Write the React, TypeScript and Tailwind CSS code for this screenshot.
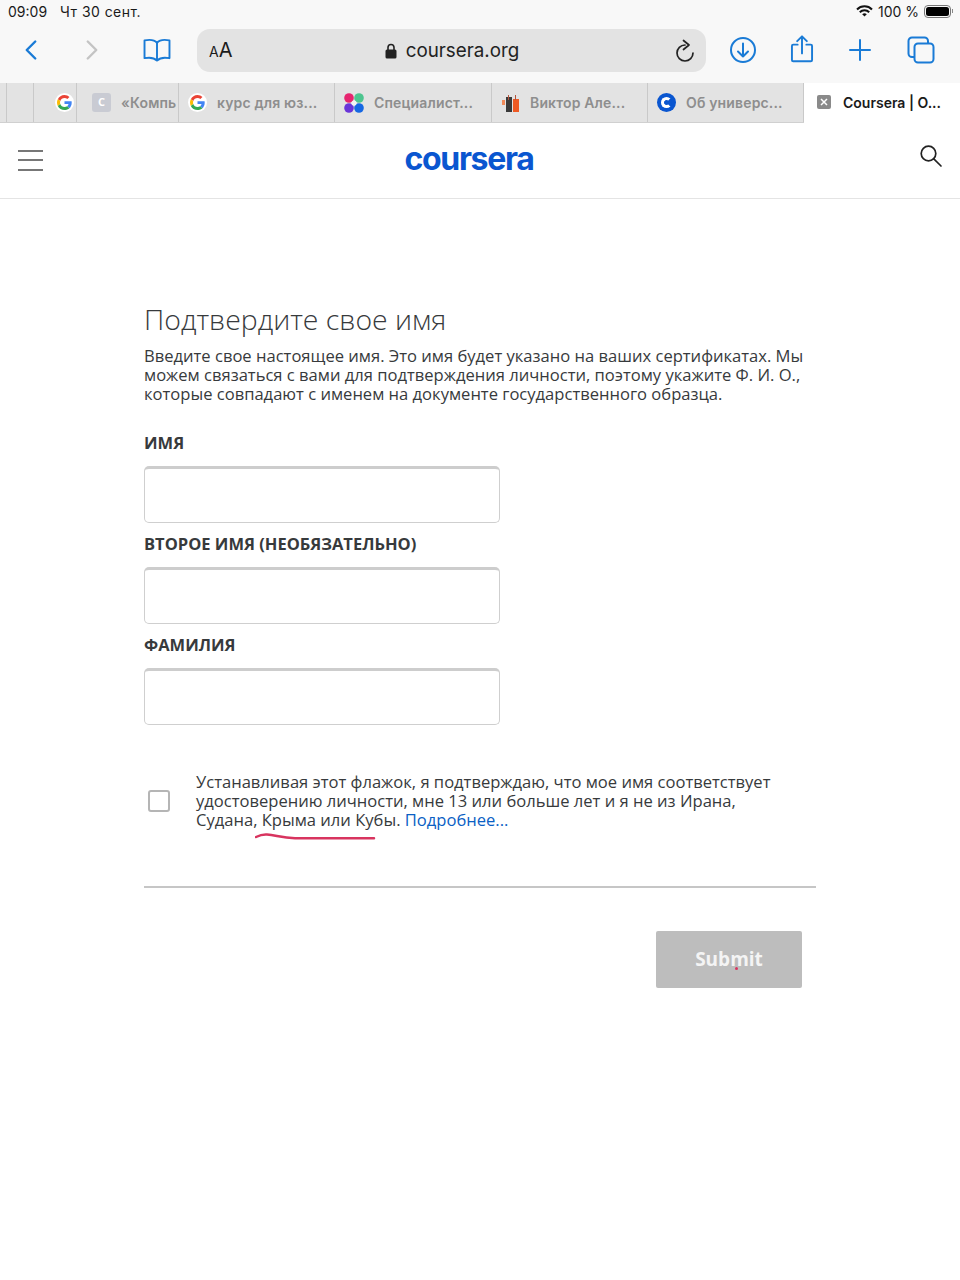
import { ChevronLeft, ChevronRight } from 'lucide-react';

const BLUE = '#1a7bd6';

function GoogleIcon({ size = 16 }: { size?: number }) {
  return (
    <svg width={size} height={size} viewBox="0 0 48 48">
      <path fill="#EA4335" d="M24 9.5c3.5 0 6.7 1.3 9.1 3.5l6.8-6.8C35.800 2.400 30.300 0 24 0 14.600 0 6.500 5.400 2.600 13.200l7.900 6.100C12.400 13.600 17.700 9.500 24 9.500z" />
      <path fill="#4285F4" d="M47 24.500c0-1.600-.1-3.100-.4-4.500H24v9h12.900c-.6 3-2.200 5.500-4.700 7.200l7.600 5.900C44.300 37.900 47 31.800 47 24.500z" />
      <path fill="#FBBC05" d="M10.500 28.700c-.5-1.400-.8-3-.8-4.700s.3-3.200.8-4.700l-7.900-6.100C.9 16.500 0 20.100 0 24s.9 7.500 2.600 10.800l7.900-6.100z" />
      <path fill="#34A853" d="M24 48c6.500 0 11.900-2.100 15.800-5.800l-7.600-5.900c-2.100 1.400-4.900 2.300-8.200 2.300-6.300 0-11.600-4.100-13.500-9.800l-7.900 6.100C6.500 42.600 14.600 48 24 48z" />
    </svg>
  );
}

function Tab({ width, icon, title }: { width: string; icon: React.ReactNode; title: string }) {
  return (
    <div className={`flex h-full items-center overflow-hidden border-r border-[#c9c9c9] ${width}`}>
      {icon}
      <span className="ml-[10px] whitespace-nowrap font-['Inter',sans-serif] text-[14px] font-semibold tracking-[0.15px] text-[#8e8e8e]">{title}</span>
    </div>
  );
}

function Field({ label }: { label: string }) {
  return (
    <div>
      <label className="block h-[23px] text-[16.500px] font-bold leading-[21px] text-[#373a3c]">{label}</label>
      <div className="mt-[11px] h-[57px] w-[356px] rounded-[5px] border border-[#cfcfcf] border-t-[3px] border-t-[#cdcdcd] bg-white" />
    </div>
  );
}

export default function App() {
  return (
    <div className="flex min-h-[1280px] w-[960px] flex-col bg-white font-['Open_Sans',sans-serif]">
      {/* status bar */}
      <div className="flex h-[22px] items-center justify-between bg-[#f8f8f8] pl-[8px] pr-[7px] font-['Inter',sans-serif] text-[14px] text-[#1a1a1a]">
        <div className="flex gap-[13px]">
          <span>09:09</span>
          <span className="tracking-[0.45px]">Чт 30 сент.</span>
        </div>
        <div className="flex items-center gap-[5px]">
          <svg width="17" height="12" viewBox="0 0 17 12" fill="none" stroke="#111" strokeWidth="2">
            <path d="M1 4.500a10.500 10.500 0 0 1 15 0" />
            <path d="M3.800 7.200a6.500 6.500 0 0 1 9.400 0" />
            <path d="M8.500 11.500 6.200 9.300a3.300 3.300 0 0 1 4.600 0z" fill="#111" stroke="none" />
          </svg>
          <span>100 %</span>
          <div className="flex items-center">
            <div className="h-[13px] w-[27px] rounded-[4px] border border-[#777] p-[1px]">
              <div className="h-full w-full rounded-[2.500px] bg-black" />
            </div>
            <div className="ml-[1px] h-[4px] w-[1px] bg-[#888]" />
          </div>
        </div>
      </div>

      {/* toolbar */}
      <div className="flex h-[61px] items-center bg-[#f8f8f8] pb-[5px]">
        <div className="flex w-[197px] items-center">
          <ChevronLeft size={34} strokeWidth={1.7} color={BLUE} className="ml-[14px]" />
          <ChevronRight size={34} strokeWidth={1.7} color="#c4c4c4" className="ml-[27px]" />
          <svg width="30" height="24" viewBox="0 0 30 25" fill="none" stroke={BLUE} strokeWidth="2" strokeLinejoin="round" className="ml-[33px]">
            <path d="M15 5C12.500 2 7 1.500 2 2.500V21c5-1 10-.5 13 2.500C18 20.500 23 20 28 21V2.500C23 1.500 17.500 2 15 5z" />
            <path d="M15 5v18" />
          </svg>
        </div>
        <div className="flex h-[43px] w-[509px] items-center rounded-[13px] bg-[#e3e3e3] pl-[12px] pr-[9px]">
          <span className="w-[24px] whitespace-nowrap font-['Inter',sans-serif] text-[#1c1c1c]">
            <span className="text-[14px]">A</span>
            <span className="text-[20px]">A</span>
          </span>
          <div className="flex flex-1 items-center justify-center pt-[2px] pr-[2px] text-[#222]">
            <svg width="12" height="16" viewBox="0 0 12 16" className="mr-[9px]">
              <path d="M3 7V4.500a3 3 0 0 1 6 0V7" fill="none" stroke="#222" strokeWidth="1.600" />
              <rect x="0.500" y="6.500" width="11" height="9" rx="1.500" fill="#222" />
            </svg>
            <span className="font-['Inter',sans-serif] text-[18.800px]">coursera.org</span>
          </div>
          <svg width="24" height="24" viewBox="0 0 24 24" fill="none" stroke="#222" strokeWidth="1.700" strokeLinecap="round" strokeLinejoin="round" className="mt-[2px]">
            <path d="M12 6a8 8 0 1 0 8 8" />
            <path d="M10.500 1.500 16 6l-5.500 4.500" />
          </svg>
        </div>
        <svg width="28" height="28" viewBox="0 0 28 28" fill="none" stroke={BLUE} strokeWidth="2" strokeLinecap="round" strokeLinejoin="round" className="ml-[23px]">
          <circle cx="14" cy="14" r="12" />
          <path d="M14 7.500v13M9 15.500l5 5 5-5" />
        </svg>
        <svg width="24" height="28" viewBox="0 0 26 32" fill="none" stroke={BLUE} strokeWidth="2.200" strokeLinecap="round" strokeLinejoin="round" className="ml-[33px] -mt-[3px]">
          <path d="M8 11H3a1.500 1.500 0 0 0-1.500 1.500v16A1.500 1.500 0 0 0 3 30h20a1.500 1.500 0 0 0 1.500-1.500v-16A1.500 1.500 0 0 0 23 11h-5" />
          <path d="M13 21V2M7.500 7 13 1.500 18.500 7" />
        </svg>
        <svg width="24" height="24" viewBox="0 0 24 24" fill="none" stroke={BLUE} strokeWidth="2" strokeLinecap="round" className="ml-[34px]">
          <path d="M12 2v20M2 12h20" />
        </svg>
        <svg width="28" height="28" viewBox="0 0 28 28" fill="none" stroke={BLUE} strokeWidth="2" strokeLinejoin="round" className="ml-[35px]">
          <rect x="7.500" y="7.500" width="19" height="19" rx="3.500" />
          <path d="M7.500 21H5a3.500 3.500 0 0 1-3.500-3.500V5A3.500 3.500 0 0 1 5 1.500h12.500A3.500 3.500 0 0 1 21 5v2.500" />
        </svg>
      </div>

      {/* tabs */}
      <div className="flex h-[40px] border-b border-[#d0d0d0] bg-[#e3e3e3]">
        <div className="h-full w-[7px] border-r border-[#c9c9c9]" />
        <div className="h-full w-[27px] border-r border-[#c9c9c9]" />
        <div className="flex h-full w-[43px] items-center justify-end overflow-hidden border-r border-[#c9c9c9] pr-[2px]">
          <div className="flex h-[19px] w-[19px] items-center justify-center rounded-full bg-white">
            <GoogleIcon size={15} />
          </div>
        </div>
        <Tab
          width="w-[102px] pl-[15px]"
          title="«Компь"
          icon={
            <div className="flex h-[19px] w-[19px] shrink-0 items-center justify-center rounded-[3px] bg-[#c9cbd3] text-[11px] font-bold text-white">
              C
            </div>
          }
        />
        <Tab
          width="w-[156px] pl-[9px]"
          title="курс для юз..."
          icon={
            <div className="flex h-[19px] w-[19px] shrink-0 items-center justify-center rounded-full bg-white">
              <GoogleIcon size={15} />
            </div>
          }
        />
        <Tab
          width="w-[157px] pl-[9px]"
          title="Специалист..."
          icon={
            <svg width="20" height="20" viewBox="0 0 20 20" className="shrink-0">
              <circle cx="5" cy="5" r="4.800" fill="#e6246f" />
              <circle cx="15" cy="5" r="4.800" fill="#4dc58f" />
              <circle cx="5" cy="15" r="4.800" fill="#6a35d8" />
              <circle cx="15" cy="15" r="4.800" fill="#1668e3" />
              <circle cx="10" cy="10" r="2.600" fill="#f4f4f4" />
            </svg>
          }
        />
        <Tab
          width="w-[156px] pl-[10px]"
          title="Виктор Але..."
          icon={
            <svg width="18" height="18" viewBox="0 0 18 18" className="shrink-0">
              <rect x="0" y="6" width="3" height="5" fill="#ef8a5a" />
              <rect x="4" y="3" width="6" height="15" fill="#3a3a3a" />
              <rect x="11" y="5" width="6" height="13" fill="#ee5a24" />
              <rect x="6" y="1" width="1" height="5" fill="#b4533a" />
              <rect x="13" y="1" width="1" height="5" fill="#b4533a" />
            </svg>
          }
        />
        <Tab
          width="w-[156px] pl-[9px]"
          title="Об универс..."
          icon={
            <div className="flex h-[19px] w-[19px] shrink-0 items-center justify-center rounded-full bg-[#0a56d0]">
              <div className="h-[11px] w-[11px] rounded-full border-[3px] border-white border-r-[#0a56d0]" />
            </div>
          }
        />
        <div className="flex h-[40px] flex-1 items-center bg-white pb-[2px] pl-[13px]">
          <div className="flex h-[14px] w-[14px] items-center justify-center rounded-[2px] bg-[#8a8a8a]">
            <svg width="8" height="8" viewBox="0 0 8 8" stroke="#fff" strokeWidth="1.500">
              <path d="M1 1l6 6M7 1 1 7" />
            </svg>
          </div>
          <span className="ml-[12px] whitespace-nowrap font-['Inter',sans-serif] text-[14px] font-semibold text-[#1a1a1a]">Coursera | О...</span>
        </div>
      </div>

      {/* coursera header */}
      <header className="flex h-[76px] items-center justify-between border-b border-[#e4e4e4] pl-[18px] pr-[17px]">
        <div className="flex w-[25px] flex-col gap-[7.500px] pb-[1px]">
          <div className="h-[2px] bg-[#777]" />
          <div className="h-[2px] bg-[#777]" />
          <div className="h-[2px] bg-[#777]" />
        </div>
        <span className="mr-[24px] mb-[3px] font-['Inter',sans-serif] text-[32px] font-bold tracking-[-1.300px] text-[#0a56d0]">coursera</span>
        <svg width="24" height="24" viewBox="0 0 24 24" fill="none" stroke="#222" strokeWidth="1.700" strokeLinecap="round" className="mb-[7px]">
          <circle cx="9.500" cy="8.500" r="7.300" />
          <path d="M14.800 13.800 22 21" />
        </svg>
      </header>

      {/* form */}
      <main className="relative w-[672px] self-center pt-[101px]">
        <h1 className="text-[28.400px] font-light leading-[38px] text-[#373a3c]">Подтвердите свое имя</h1>
        <p className="mt-[8px] text-[16.570px] leading-[19px] text-[#373a3c]">
          Введите свое настоящее имя. Это имя будет указано на ваших сертификатах. Мы можем связаться с вами для подтверждения личности, поэтому укажите Ф. И. О., которые совпадают с именем на документе государственного образца.
        </p>

        <div className="mt-[29px] flex flex-col gap-[10px]">
          <Field label="ИМЯ" />
          <Field label="ВТОРОЕ ИМЯ (НЕОБЯЗАТЕЛЬНО)" />
          <Field label="ФАМИЛИЯ" />
        </div>

        <div className="relative mt-[47px] flex items-center">
          <div className="ml-[4px] h-[22px] w-[22px] shrink-0 rounded-[3px] border-[2px] border-[#b5b5b5] bg-white" />
          <p className="ml-[26px] w-[600px] text-[16.570px] leading-[19px] text-[#373a3c]">
            Устанавливая этот флажок, я подтверждаю, что мое имя соответствует удостоверению личности, мне 13 или больше лет и я не из Ирана, Судана, Крыма или Кубы. <span className="text-[#0a60c4]">Подробнее...</span>
          </p>
          {/* red pen mark */}
          <svg width="122" height="8" viewBox="0 0 122 8" fill="none" stroke="#d8345f" strokeWidth="2.500" strokeLinecap="round" className="absolute left-[111px] top-[61px]">
            <path d="M1 4C5 2 8 1.200 12 1.500c9 .8 15 3.500 28 3.800h79" />
          </svg>
        </div>

        <hr className="mt-[57px] border-t-[2px] border-[#c6c6c6]" />

        <div className="mt-[43px] flex justify-end pr-[14px]">
          <button className="relative h-[57px] w-[146px] rounded-[2px] bg-[#bdbdbd] text-[19px] font-bold text-[#f4f4f4]">
            Submit
            <span className="absolute left-[79px] top-[36px] h-[3px] w-[3px] rounded-full bg-[#d8345f]" />
          </button>
        </div>
      </main>
    </div>
  );
}
